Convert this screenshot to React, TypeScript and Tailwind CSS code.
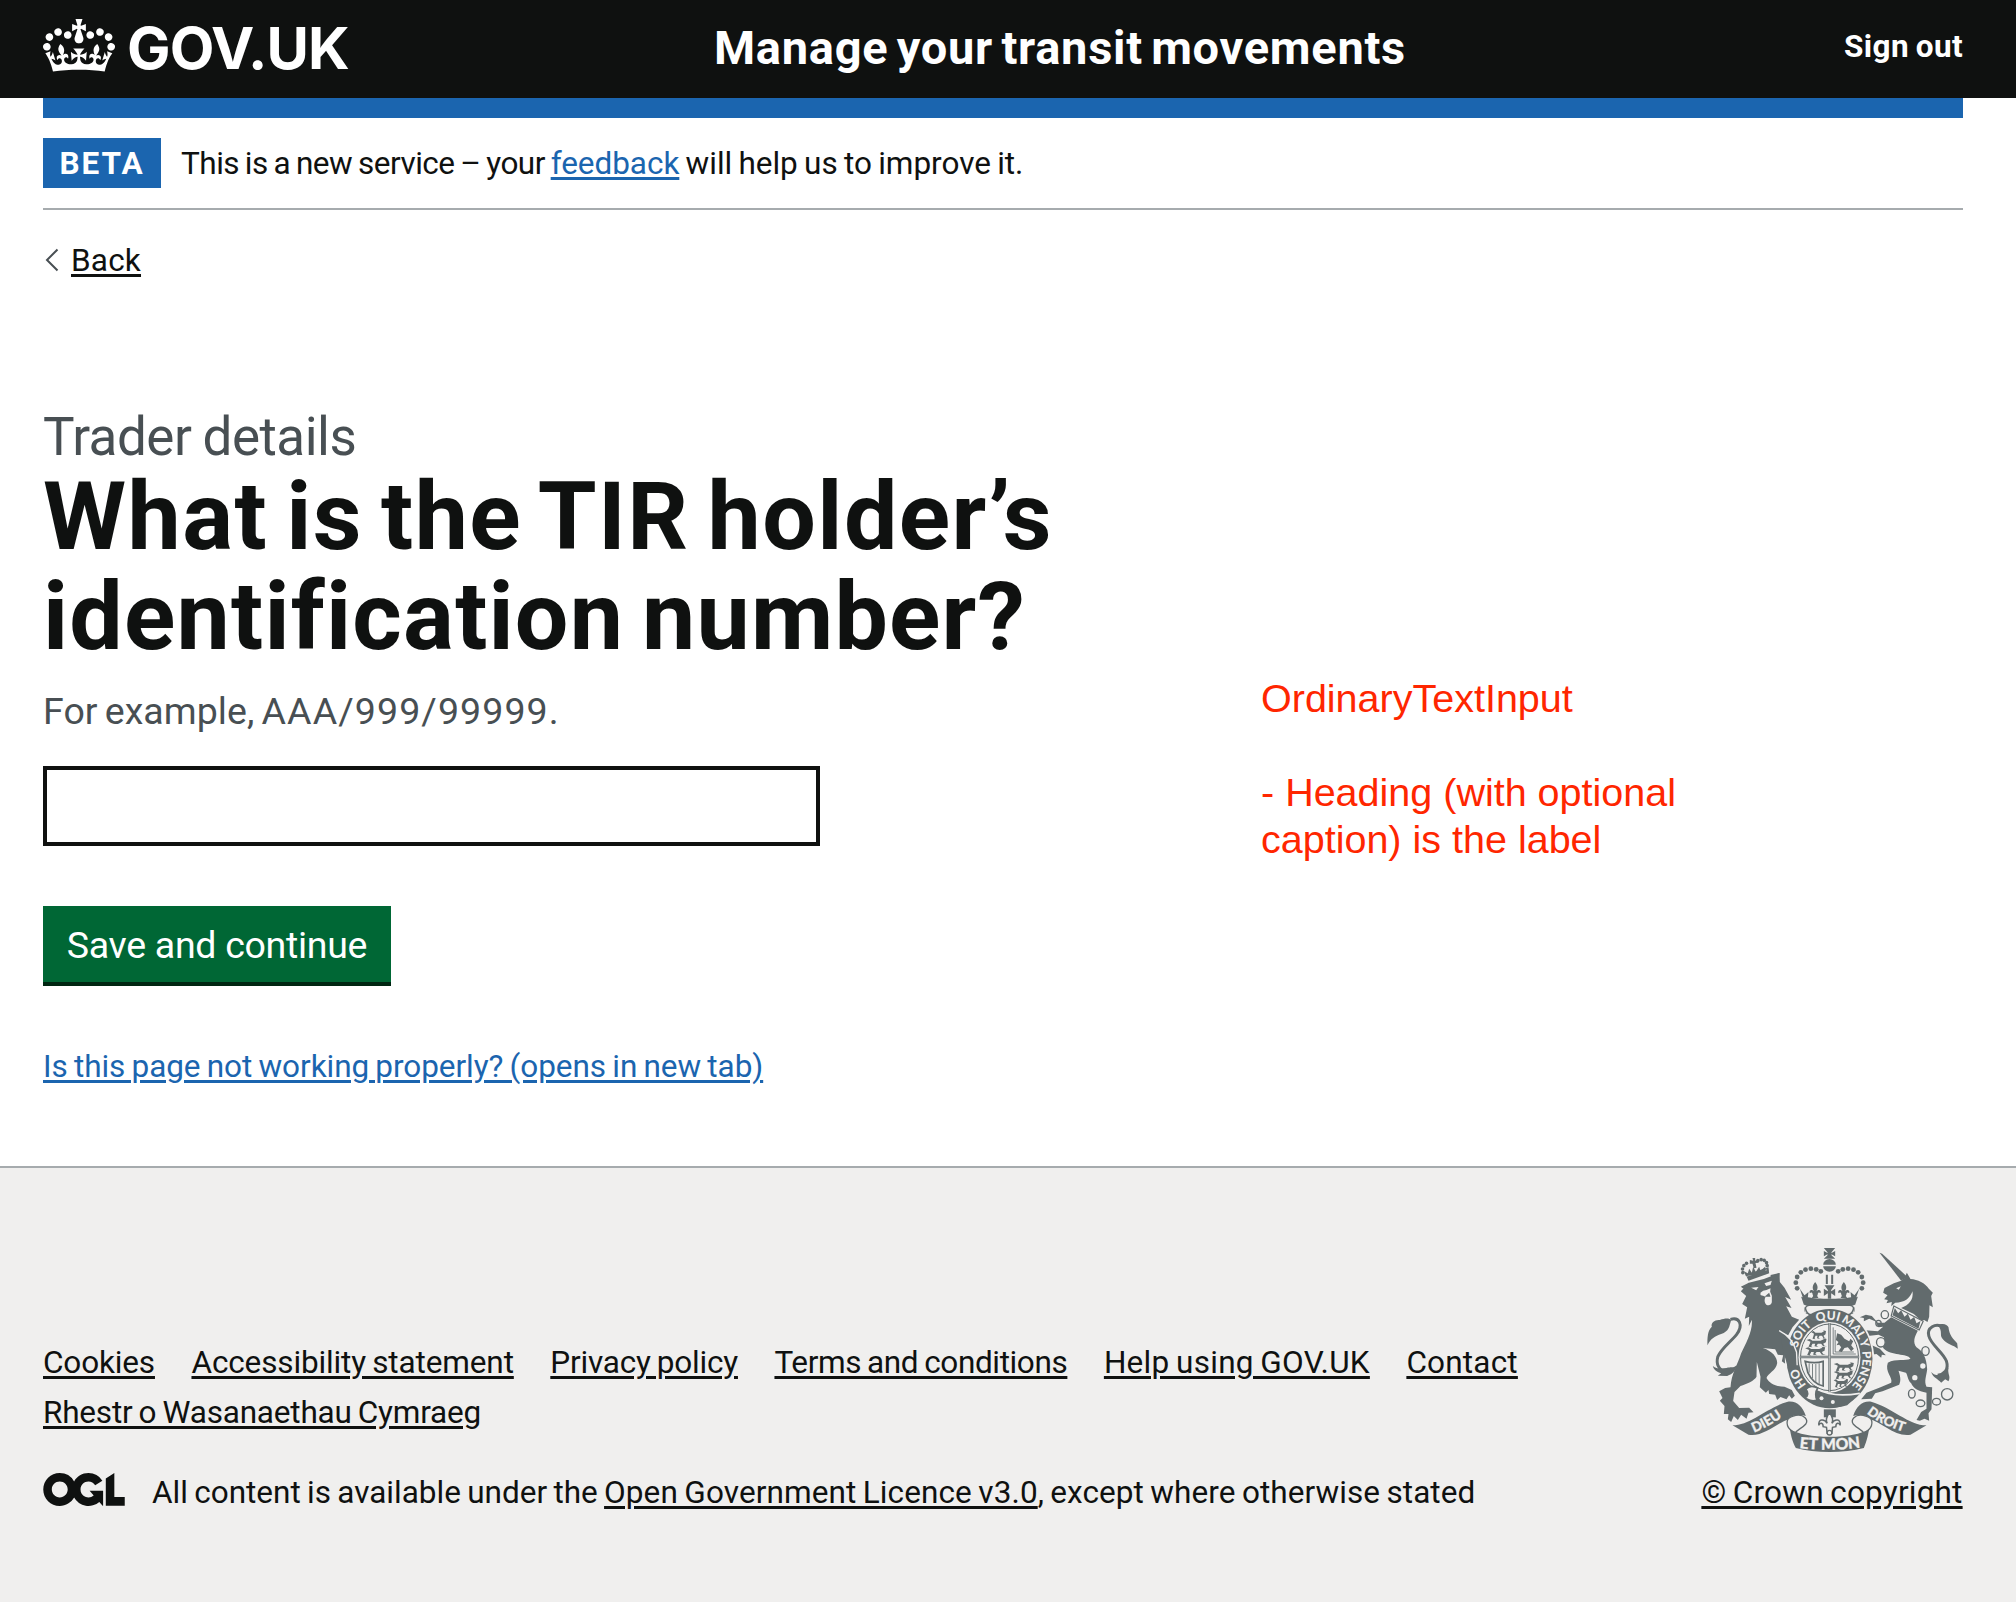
import type { ReactNode } from "react";

const INK = "#626b6d";
const PAPER = "#f0efee";

function CrownLogo() {
  return (
    <svg viewBox="0 0 132 97" className="h-[53px] w-[72px]" fill="currentColor" aria-hidden="true">
      <path d="M25 30.2c3.5 1.5 7.7-.2 9.1-3.7 1.5-3.6-.2-7.8-3.9-9.2-3.6-1.4-7.6.3-9.1 3.9-1.4 3.5.3 7.5 3.9 9zM9 39.5c3.6 1.5 7.8-.2 9.2-3.7 1.5-3.6-.2-7.8-3.9-9.1-3.6-1.5-7.6.2-9.1 3.8-1.4 3.5.3 7.5 3.8 9zM4.4 57.2c3.5 1.5 7.7-.2 9.1-3.8 1.5-3.6-.2-7.7-3.9-9.1-3.5-1.5-7.6.3-9.1 3.8-1.4 3.5.3 7.6 3.9 9.1zm38.3-21.4c3.5 1.5 7.7-.2 9.1-3.8 1.5-3.6-.2-7.7-3.9-9.1-3.6-1.5-7.6.3-9.1 3.8-1.3 3.6.4 7.7 3.9 9.1zm64.4-5.6c-3.6 1.5-7.8-.2-9.1-3.7-1.5-3.6.2-7.8 3.8-9.2 3.6-1.4 7.7.3 9.2 3.9 1.3 3.5-.4 7.5-3.9 9zm15.9 9.3c-3.6 1.5-7.7-.2-9.1-3.7-1.5-3.6.2-7.8 3.7-9.1 3.6-1.5 7.7.2 9.2 3.8 1.5 3.5-.3 7.5-3.8 9zm4.7 17.7c-3.6 1.5-7.8-.2-9.2-3.8-1.5-3.6.2-7.7 3.9-9.1 3.6-1.5 7.7.3 9.2 3.8 1.3 3.5-.4 7.6-3.9 9.1zM89.3 35.8c-3.6 1.5-7.8-.2-9.2-3.8-1.4-3.6.2-7.7 3.9-9.1 3.6-1.5 7.7.3 9.2 3.8 1.4 3.6-.3 7.7-3.9 9.1zM69.7 17.7l8.9 4.7V9.3l-8.9 2.8c-.2-.3-.5-.6-.9-.9L72.4 0H59.6l3.5 11.2c-.3.3-.6.5-.9.9l-8.8-2.8v13.1l8.8-4.7c.3.3.6.7.9.9l-5 15.4v.1c-.2.8-.4 1.6-.4 2.4 0 4.1 3.1 7.5 7 8.1h.2c.3 0 .7.1 1 .1.4 0 .7 0 1-.1h.2c4-.6 7.1-4.1 7.1-8.1 0-.8-.1-1.7-.4-2.4V34l-5.1-15.4c.4-.2.7-.6 1-.9zM66 92.8c16.9 0 32.8 1.1 47.1 3.2 4-16.9 8.9-26.7 14-33.5l-9.6-3.4c1 4.9 1.1 7.2 0 10.2-1.5-1.4-3-4.3-4.2-8.7L108.6 76c2.8-2 5-3.2 7.5-3.3-4.4 9.4-10 11.9-13.6 11.2-4.3-.8-6.3-4.6-5.6-7.9 1-4.7 5.7-5.9 8-.5 4.3-8.7-3-11.4-7.6-8.8 7.1-7.2 7.9-13.5 2.1-21.1-8 6.1-8.1 12.3-4.5 20.8-4.7-5.4-12.1-2.5-9.5 6.2 3.4-5.2 7.9-2 7.2 3.1-.6 4.3-6.4 7.8-13.5 7.2-10.3-.9-10.9-8-11.2-13.8 2.5-.5 7.1 1.8 11 7.3L80.2 60c-4.1 4.4-8 5.3-12.3 5.4 1.4-4.4 8-11.6 8-11.6H55.5s6.4 7.2 7.9 11.6c-4.2-.1-8-1-12.3-5.4l1.4 16.4c3.9-5.5 8.5-7.7 10.9-7.3-.3 5.8-.9 12.8-11.1 13.8-7.2.6-12.9-2.9-13.5-7.2-.7-5 3.8-8.3 7.1-3.1 2.7-8.7-4.6-11.6-9.4-6.2 3.7-8.5 3.6-14.7-4.6-20.8-5.8 7.6-5 13.9 2.2 21.1-4.7-2.6-11.9.1-7.7 8.8 2.3-5.5 7.1-4.2 8.1.5.7 3.3-1.3 7.1-5.7 7.9-3.5.7-9-1.8-13.5-11.2 2.5.1 4.7 1.3 7.5 3.3l-4.7-15.4c-1.2 4.4-2.7 7.2-4.3 8.7-1.1-3-.9-5.3 0-10.2l-9.5 3.4c5 6.9 9.9 16.7 14 33.5 14.8-2.1 30.8-3.2 47.7-3.2z" />
    </svg>
  );
}

function OglLogo() {
  return (
    <svg viewBox="0 0 483.2 195.7" className="mt-[5px] h-[33px] w-[82px] shrink-0" fill="currentColor" aria-hidden="true">
      <path d="M421.5 142.8V.1l-50.7 32.3v161.1h112.4v-50.7zm-122.3-9.6A47.12 47.12 0 0 1 221 97.8c0-26 21.1-47.1 47.1-47.1 16.7 0 31.4 8.7 39.7 21.8l42.7-27.2A97.63 97.63 0 0 0 268.1 0c-36.5 0-68.3 20.1-85.1 49.7A98 98 0 0 0 97.8 0C43.9 0 0 43.9 0 97.8s43.9 97.8 97.8 97.8c36.5 0 68.3-20.1 85.1-49.7a97.76 97.76 0 0 0 149.6 25.4l19.4 22.2h3v-87.8h-80l24.3 27.5zM97.8 145c-26 0-47.1-21.1-47.1-47.1s21.1-47.1 47.1-47.1 47.1 21.1 47.1 47.1S123.8 145 97.8 145" />
    </svg>
  );
}

const GARTER: [string, string][] = [
  ["HO", "16%"],
  ["SOIT", "35.5%"],
  ["QUI", "49.3%"],
  ["MAL", "61%"],
  ["Y", "69%"],
  ["PENSE", "80.5%"],
];

const ARCH_DOTS: [number, number][] = [
  [350, 205], [346, 188], [350, 171], [361, 157], [375, 149], [391, 146], [407, 148], [421, 154],
];

const LION_CROWN_DOTS: [number, number][] = [
  [187, 158], [186, 147], [190, 137], [198, 130], [232, 122], [242, 119], [251, 121], [258, 128], [260, 137],
];

/* One passant beast of the quarterings, drawn in a 70 by 26 box. */
function Beast({ x, y, w = 1 }: { x: number; y: number; w?: number }) {
  return (
    <path
      transform={`translate(${x} ${y}) scale(${w} 1)`}
      d="M2 4l10-3 8 5 24 0 10-4-4-3 12 2-2 10-8 4 4 6 8 2-12 0-6-8-10 0-4 6 6 4-12-2 2-8-8 0-4 8 4 3-12-2 4-9 2-6z"
    />
  );
}

function Fleur({ x, y }: { x: number; y: number }) {
  return (
    <path
      transform={`translate(${x} ${y})`}
      d="M0-26C10-14 8-6 4 2c6-8 16-4 12 6-4-4-8-2-8 2l-2 6 4 6h-20l4-6-2-6c0-4-4-6-8-2-4-10 6-14 12-6-4-8-6-16 4-28z"
    />
  );
}

function RoyalArms() {
  return (
    <svg viewBox="80 84 752 612" className="h-[204px] w-[251px] [word-spacing:0px]" fill={INK} aria-hidden="true">
      <defs>
        <path id="garter" d="M447 527A99 114 0 0 1 447 299A99 114 0 0 1 447 527" />
        <path id="dieu" d="M220 638Q285 612 330 570" />
        <path id="mon" d="M352 684Q447 696 545 682" />
        <path id="droit" d="M558 580Q610 620 684 640" />
      </defs>

      {/* lion */}
      <path d="M205 188L250 177L297 159L298 186L312 203L332 239L314 231L333 264L317 259L334 290L356 299L336 322L323 346L298 334L344 373L358 402L356 436L350 446L344 432L334 444L323 434L312 430L304 424L308 406L292 404L284 388L247 384C278 394 291 414 290 430C287 452 262 460 258 474C266 490 286 500 312 500L334 510L343 527L334 536L326 526L318 538L300 531L290 540L284 524L266 522L264 510L256 518L238 502L240 470L229 426L228 470C222 482 198 492 180 498L162 516L158 543L176 564L206 563L219 577L204 578L198 596L182 584L172 600L160 588L152 606L142 598L144 582L130 582L132 558L118 542L126 534L116 514L134 504L150 502C152 462 172 432 182 400C196 370 217 334 214 300L205 318L206 290L193 296L200 262L185 252L197 228L181 214Z" />
      <path d="M181 200l24-12 4 10-20 8zM270 165l27-6-2 18-22 2z" />
      <path d="M212 203l22-2-7 10zM252 190l22-8-4 13-13 3zM240 218l8-6 10-2 12-5-1 10 5 12v20c-2 10-14 12-19 4-4-6-3-14 0-20-5-4-9-4-15-6z" fill={PAPER} />
      <path d="M252 230h18l-4-12z" />
      <path d="M196 164L264 142L266 160L204 182Z" />
      <path d="M200 168l58-18" stroke={PAPER} strokeWidth="3" />
      <path d="M196 168l-6-14 12 6 4-14 8 12 4-18 8 16 10-16 4 12 14-12 2 14 6-4-2 12z" />
      <path d="M208 120l10 2-2-8 8 0 0 8 10-2 0 8-9 1 3 14-8 2-4-14-8 0z" />
      {LION_CROWN_DOTS.map(([x, y]) => (
        <circle key={`${x}-${y}`} cx={x} cy={y} r="5.4" />
      ))}
      <path d="M150 298C176 290 190 314 168 344C150 366 122 386 112 410C106 432 114 450 138 458" fill="none" stroke={INK} strokeWidth="9" />
      <path d="M81 376C80 352 82 330 94 320C90 308 104 298 118 300C134 294 146 294 152 300C146 320 146 334 122 342C104 348 90 356 81 376Z" />
      <path d="M97 438C108 448 124 446 138 444C150 440 158 446 168 436C166 452 158 462 140 468L112 467L122 460C110 456 100 450 97 438Z" />

      {/* unicorn */}
      <path d="M597 98L605 101L680 170L662 182Z" />
      <path d="M662 182L672 174L679 158L690 177C712 178 734 190 745 206L757 218L752 228L757 262L747 256L746 290L741 306L731 300L722 302L700 282L662 264C684 256 700 240 696 214C688 236 672 248 644 248L632 259L634 246L618 250L622 240L611 238L621 226L608 218L612 204L640 190Z" />
      <path d="M647 205l14-6-6 10z" fill={PAPER} />
      <path d="M640 258L728 304L716 330L632 288Z" fill={PAPER} stroke={INK} strokeWidth="3.5" />
      <path d="M636 286L643 264L653 280L662 271L672 290L682 281L690 299L701 291L708 310L720 303L714 326Z" />
      <path d="M632 292L712 332C702 350 696 366 708 382C728 394 738 414 740 448C738 468 730 484 738 500L755 502L753 568L744 580L746 602L732 596L718 602L708 600L722 576L738 566L738 518C712 514 698 504 692 490C680 478 682 464 676 458L654 452C662 476 660 484 656 494L606 514L584 520L574 536L542 538L558 518L600 502L632 488C638 472 612 456 622 428C646 414 676 424 690 416C680 398 632 410 608 384C606 372 614 364 610 352L594 344L562 348L574 376L598 386L616 406L604 404L602 413L588 402L572 404L576 392L556 372L545 330L592 334L608 320L594 322L584 304L566 296L550 304L550 294L538 292L556 284L574 288L592 308L612 308Z" />
      <path d="M790 322C764 306 738 324 745 348C752 376 788 396 798 424C806 450 790 462 772 466" fill="none" stroke={INK} strokeWidth="9" />
      <path d="M772 316C786 308 800 312 804 322C806 338 810 350 830 370L832 386C818 374 800 374 786 356C776 346 788 334 772 316Z" />
      <path d="M752 456C764 470 776 466 788 456L804 444C800 462 812 468 804 484L794 478L782 488C772 476 758 474 752 456Z" />
      <g fill="none" stroke={INK} strokeWidth="4">
        <ellipse cx="613" cy="284" rx="11" ry="12" fill={PAPER} />
        <ellipse cx="594" cy="310" rx="8" ry="9" />
        <ellipse cx="601" cy="367" rx="13" ry="14" fill={PAPER} />
        <ellipse cx="735" cy="393" rx="11" ry="13" fill={PAPER} />
        <ellipse cx="694" cy="521" rx="10" ry="13" />
        <ellipse cx="720" cy="550" rx="13" ry="10" />
        <ellipse cx="768" cy="545" rx="12" ry="10" />
        <circle cx="800" cy="523" r="17" />
      </g>
      <g fill={PAPER}>
        <circle cx="727" cy="438" r="8" />
        <circle cx="703" cy="473" r="8" />
      </g>

      {/* imperial crown */}
      <path d="M430 84h34l-11 13v2l11-6v16l-11-6v3l11 10h-34l11-10v-3l-11 6v-16l11 6v-2z" />
      <path d="M428 134a19 17 0 0 1 38 0zM428 139h38a19 16 0 0 1-38 0z" />
      {ARCH_DOTS.map(([x, y]) => (
        <g key={`${x}-${y}`}>
          <circle cx={x} cy={y} r="7.2" />
          <circle cx={894 - x} cy={y} r="7.2" />
        </g>
      ))}
      <path d="M436 164h6v28h-6zM452 164h6v28h-6z" />
      <path d="M432 196h30l-10 14v4l12-8v22l-12-8v16h-10v-16l-12 8v-22l12 8v-4z" />
      <Fleur x={404} y={212} />
      <Fleur x={490} y={212} />
      <path d="M358 206l14 20 12-10-2 16c30 6 100 6 130 0l-2-16 12 10 14-20-8 24-8 26c-40 8-106 8-146 0l-8-26z" />
      <path d="M362 230C400 242 494 242 532 230L524 254C480 262 414 262 370 254Z" />
      <rect x="374" y="256" width="146" height="27" rx="13" fill={PAPER} stroke={INK} strokeWidth="4.5" />

      {/* garter and shield */}
      <ellipse cx="447" cy="416" rx="134" ry="154" fill={PAPER} />
      <path d="M374 266h146v14h-146z" fill={PAPER} />
      <path d="M374 262q4 22 18 22M520 262q-4 22-18 22" fill="none" stroke={INK} strokeWidth="4.5" />
      <ellipse cx="447" cy="416" rx="129" ry="149" />
      <ellipse cx="447" cy="412" rx="93" ry="106" fill={PAPER} />
      <ellipse cx="447" cy="412" rx="87" ry="100" fill="none" stroke={INK} strokeWidth="3" />
      <path d="M447 310v205M358 411h178" stroke={INK} strokeWidth="7" />
      <path d="M447 310v205M358 411h178" stroke={PAPER} strokeWidth="1.6" />
      <Beast x={390} y={332} w={0.75} />
      <Beast x={376} y={356} />
      <Beast x={372} y={381} />
      <Beast x={458} y={428} />
      <Beast x={458} y={452} w={0.95} />
      <Beast x={458} y={477} w={0.72} />
      <path d="M458 322v80h68M464 330v66h56" fill="none" stroke={INK} strokeWidth="2.5" />
      <path d="M470 340l12 4 10 12 14 8 4-8 8 8-6 12 8 10-8 8-10-12-10 2-8 12-10-2 8-12-6-8-8 2 6-10-8-6z" />
      <path d="M374 424q28 8 54 0v74q-30-6-46-40z" fill="none" stroke={INK} strokeWidth="5" />
      <path d="M386 430v28M396 432v42M406 432v54M416 430v62" stroke={INK} strokeWidth="2.5" />
      <path d="M296 332C320 344 340 366 348 396L350 436L344 446L338 434L330 444L320 434L310 400Z" />
      <path d="M296 332C320 344 340 366 348 396L350 436" fill="none" stroke={PAPER} strokeWidth="4" />
      <g fill={PAPER} fontFamily="Lato, sans-serif" fontWeight="900" fontSize="36" textAnchor="middle">
        {GARTER.map(([word, at]) => (
          <text key={word}>
            <textPath href="#garter" startOffset={at}>{word}</textPath>
          </text>
        ))}
      </g>
      <path d="M376 506C400 524 446 536 520 538L500 556C450 572 410 560 380 536Z" />
      <path d="M410 508C440 524 480 530 538 520" fill="none" stroke={PAPER} strokeWidth="5" />
      <path d="M376 508C386 496 400 498 412 504C404 514 404 532 410 540C396 546 380 540 374 532C384 528 384 516 376 508Z" fill={PAPER} stroke={INK} strokeWidth="5" />
      <circle cx="423" cy="535" r="6" fill={PAPER} />
      <circle cx="457" cy="546" r="6" fill={PAPER} />

      {/* motto scroll */}
      <path d="M430 568h36v24h-36z" />
      <path d="M447 578C458 594 458 600 454 610C462 596 482 596 479 616C476 606 466 608 466 620L456 622L454 640H440L438 622L428 620C428 608 418 606 415 616C412 596 432 596 440 610C436 600 436 594 447 578Z" fill={PAPER} stroke={INK} strokeWidth="4.5" />
      <circle cx="447" cy="638" r="7" fill={PAPER} stroke={INK} strokeWidth="4" />
      <path d="M156 616C210 616 260 562 322 545C350 542 366 560 376 588C352 580 340 590 330 596C290 606 250 652 204 644Z" />
      <path d="M738 616C684 616 634 562 572 545C544 542 528 560 518 588C542 580 554 590 564 596C604 606 644 652 690 644Z" />
      <path d="M346 586C372 582 384 600 376 612C364 626 350 628 344 640C328 632 314 616 322 598C328 590 336 588 346 586Z" fill={PAPER} stroke={INK} strokeWidth="4" />
      <path d="M548 586C522 582 510 600 518 612C530 626 544 628 550 640C566 632 580 616 572 598C566 590 558 588 548 586Z" fill={PAPER} stroke={INK} strokeWidth="4" />
      <path d="M328 626C370 658 524 658 566 626C562 650 558 664 550 684C490 700 404 700 346 684C336 664 332 650 328 626Z" />
      <g fill={PAPER} stroke={PAPER} strokeWidth="0.8" fontFamily="Lato, sans-serif" fontWeight="900" fontSize="41">
        <text><textPath href="#dieu">DIEU</textPath></text>
        <text fontSize="47" textAnchor="middle"><textPath href="#mon" startOffset="50%">ET MON</textPath></text>
        <text fontSize="40"><textPath href="#droit">DROIT</textPath></text>
      </g>
    </svg>
  );
}

function Link({ className = "", children }: { className?: string; children: ReactNode }) {
  return (
    <a href="#" className={`whitespace-nowrap underline decoration-[3px] underline-offset-[3px] ${className}`}>
      {children}
    </a>
  );
}

export default function App() {
  return (
    <div className="flex h-[1602px] flex-col bg-white font-['Roboto',sans-serif] text-[31.5px] leading-[50px] text-[#0f1110] [word-spacing:-1.5px]">
      <header className="flex h-[98px] items-start justify-between bg-[#0f1110] pr-[53px] pl-[43px] text-white">
        <div className="flex w-[671px] items-start gap-3 pt-[19px]">
          <CrownLogo />
          <span className="mt-[-1px] font-['Inter',sans-serif] text-[58px] leading-[60px] font-bold tracking-[-0.9px]">GOV.UK</span>
        </div>
        <span className="flex-1 pt-[18px] text-[47px] leading-[60px] font-bold tracking-[0.72px] [word-spacing:-4px]">Manage your transit movements</span>
        <span className="pt-[22px] font-bold tracking-[0.4px]">Sign out</span>
      </header>

      <div className="mr-[53px] ml-[43px] h-5 bg-[#1b65af]" />
      <div className="mr-[53px] ml-[43px] flex h-[92px] items-center border-b-2 border-[#a6abae]">
        <strong className="mr-5 flex h-[50px] w-[118px] items-center justify-center bg-[#1b65af] pt-[2px] font-bold tracking-[2px] text-white">BETA</strong>
        <span className="pt-[2px] whitespace-nowrap">
          <span className="tracking-[-0.51px]">This is a new service – your </span>
          <Link className="tracking-[-0.05px] text-[#1b65af]">feedback</Link>
          <span className="tracking-[-0.02px]"> will help us to improve it.</span>
        </span>
      </div>

      <a href="#" className="mr-[53px] ml-[43px] mt-[25px] flex h-[50px] items-center">
        <svg viewBox="0 0 14 24" className="ml-[2px] h-6 w-[14px]" fill="none" stroke="#484f53" strokeWidth="2" aria-hidden="true">
          <path d="M12.5 1.5L2 12L12.5 22.5" />
        </svg>
        <span className="mt-[2px] ml-3 tracking-[0.2px] underline decoration-[3px] underline-offset-[3px]">Back</span>
      </a>

      <div className="mr-[53px] ml-[43px] flex flex-1 pt-[122px]">
        <main className="w-[1218px]">
          <h1>
            <span className="block text-[53px] leading-[60px] tracking-[-0.5px] text-[#484f53]">Trader details</span>
            <span className="block text-[95px] leading-[100px] font-bold whitespace-nowrap [word-spacing:-7px]">
              <span className="block tracking-[1.45px]">What is the TIR holder’s</span>
              <span className="block tracking-[1.22px]">identification number?</span>
            </span>
          </h1>
          <p className="mt-[19px] text-[37.5px] text-[#484f53]">
            <span className="tracking-[0.05px] [word-spacing:-2.2px]">For example, </span>
            <span className="tracking-[1.1px]">AAA/999/99999.</span>
          </p>
          <input type="text" aria-label="Identification number" className="mt-[30px] block h-20 w-[777px] border-4 border-[#0f1110] bg-white" />
          <button type="button" className="mt-[60px] flex h-20 w-[348px] items-center justify-center border-b-4 border-[#002612] bg-[#006735] pt-[2px] text-[37.5px] tracking-[-0.3px] text-white">
            Save and continue
          </button>
          <p className="mt-14">
            <Link className="tracking-[-0.06px] text-[#1b65af]">Is this page not working properly? (opens in new tab)</Link>
          </p>
        </main>
        <aside className="mt-[268px] w-[460px] font-['Liberation_Sans',Arial,sans-serif] text-[39.5px] leading-[47px] text-[#ff2600] [word-spacing:0px]">
          <p>OrdinaryTextInput</p>
          <p className="mt-[47px]">- Heading (with optional caption) is the label</p>
        </aside>
      </div>

      <footer className="flex h-[436px] justify-between border-t-2 border-[#a6abae] bg-[#f0efee] pr-[53px] pl-[43px]">
        <div className="pt-[170px]">
          <ul className="flex gap-[36.5px]">
            <li><Link className="tracking-[-0.15px]">Cookies</Link></li>
            <li><Link className="tracking-[-0.13px]">Accessibility statement</Link></li>
            <li><Link className="tracking-[-0.2px]">Privacy policy</Link></li>
            <li><Link className="tracking-[-0.37px]">Terms and conditions</Link></li>
            <li><Link className="tracking-[0.27px]">Help using GOV.UK</Link></li>
            <li><Link className="tracking-[0.2px]">Contact</Link></li>
          </ul>
          <div><Link className="tracking-[-0.2px]">Rhestr o Wasanaethau Cymraeg</Link></div>
          <div className="mt-[30px] flex items-start">
            <OglLogo />
            <p className="ml-[27px] whitespace-nowrap">
              All content is available under the <Link className="tracking-[0.1px]">Open Government Licence v3.0</Link>
              <span className="tracking-[0.07px]">, except where otherwise stated</span>
            </p>
          </div>
        </div>
        <div className="flex w-[262px] flex-col items-center pt-[80px]">
          <RoyalArms />
          <div className="mt-[16px]"><Link className="tracking-[0.2px]">© Crown copyright</Link></div>
        </div>
      </footer>
    </div>
  );
}
